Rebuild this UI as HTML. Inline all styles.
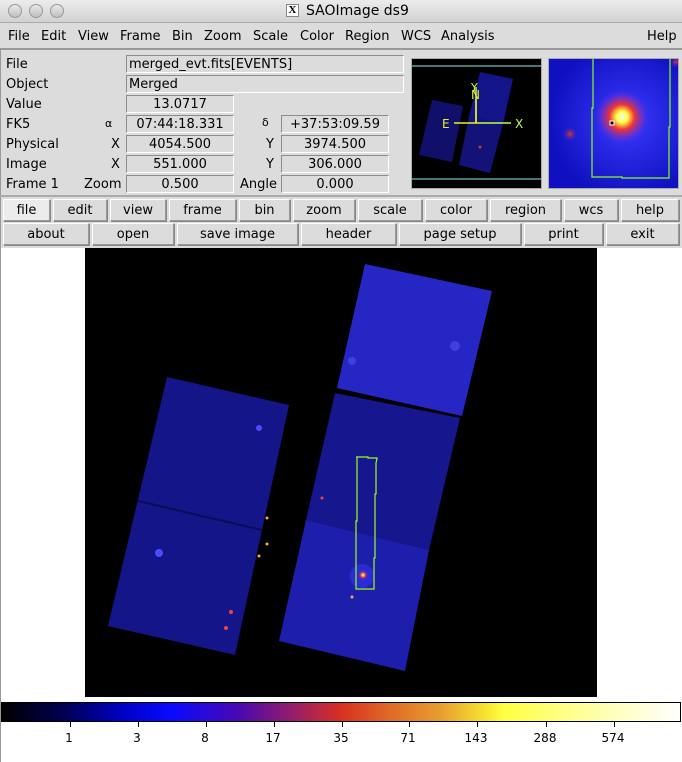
<!DOCTYPE html>
<html><head><meta charset="utf-8"><style>
*{margin:0;padding:0;box-sizing:border-box}
body{width:682px;height:762px;background:#fff;font-family:"DejaVu Sans","Liberation Sans",sans-serif;font-size:13px;color:#000;position:relative;overflow:hidden}
.a{position:absolute}
.t{position:absolute;white-space:nowrap;line-height:18px}
.p .t{margin-top:2px}
.box{position:absolute;background:#dcdcdc;border:1px solid #fff;border-top-color:#8c8c8c;border-left-color:#8c8c8c;height:18px;line-height:17px;text-align:center;white-space:nowrap}
.btn{position:absolute;background:#dcdcdc;border:1px solid #999;border-top-color:#fff;border-left-color:#fff;height:22px;line-height:21px;text-align:center;box-shadow:1px 1px 0 #888}
.tk{position:absolute;top:722px;width:1px;height:5px;background:#000}
.lb{position:absolute;top:729px;width:40px;margin-left:-20px;text-align:center;font-size:12px;line-height:18px}
</style></head><body>
<div class="a" style="left:0;top:0;width:682px;height:23px;background:linear-gradient(#ececec,#d2d2d2);border-bottom:1px solid #aaa"></div>
<div class="a" style="left:8px;top:4px;width:14px;height:14px;border-radius:50%;background:linear-gradient(#e8e8e8,#c0c0c0);border:1px solid #999"></div>
<div class="a" style="left:29px;top:4px;width:14px;height:14px;border-radius:50%;background:linear-gradient(#e8e8e8,#c0c0c0);border:1px solid #999"></div>
<div class="a" style="left:50px;top:4px;width:14px;height:14px;border-radius:50%;background:linear-gradient(#e8e8e8,#c0c0c0);border:1px solid #999"></div>
<div class="a" style="left:286px;top:4px;width:13px;height:13px;border:1px solid #888;background:#fff;font:bold 11px 'Liberation Serif',serif;line-height:11px;text-align:center">X</div>
<div class="t" style="left:306px;top:2px;font-size:14px">SAOImage ds9</div>
<div class="a" style="left:0;top:23px;width:682px;height:27px;background:#dcdcdc;border-bottom:2px solid #999"></div>
<div class="p">
<div class="t" style="top:26px;left:8px">File</div><div class="t" style="top:26px;left:41px">Edit</div><div class="t" style="top:26px;left:78px">View</div><div class="t" style="top:26px;left:120px">Frame</div><div class="t" style="top:26px;left:172px">Bin</div><div class="t" style="top:26px;left:204px">Zoom</div><div class="t" style="top:26px;left:253px">Scale</div><div class="t" style="top:26px;left:300px">Color</div><div class="t" style="top:26px;left:345px">Region</div><div class="t" style="top:26px;left:401px">WCS</div><div class="t" style="top:26px;left:441px">Analysis</div><div class="t" style="top:26px;left:647px">Help</div>
</div>
<div class="a" style="left:0;top:50px;width:682px;height:198px;background:#dcdcdc;border-left:1px solid #999"></div>
<div class="a" style="left:0;top:195px;width:682px;height:2px;background:#aaa"></div>
<div class="p">
<div class="t" style="left:6px;top:54px">File</div>
<div class="t" style="left:6px;top:74px">Object</div>
<div class="t" style="left:6px;top:94px">Value</div>
<div class="t" style="left:6px;top:114px">FK5</div>
<div class="t" style="left:6px;top:134px">Physical</div>
<div class="t" style="left:6px;top:154px">Image</div>
<div class="t" style="left:6px;top:174px">Frame 1</div>
<div class="t" style="left:105px;top:113px;font-size:11px">α</div>
<div class="t" style="left:111px;top:134px">X</div><div class="t" style="left:111px;top:154px">X</div><div class="t" style="left:84px;top:174px">Zoom</div>
<div class="t" style="left:262px;top:112px;font-size:11px">δ</div>
<div class="t" style="left:266px;top:134px">Y</div><div class="t" style="left:266px;top:154px">Y</div><div class="t" style="left:240px;top:174px">Angle</div>
</div>
<div class="box" style="left:126px;top:55px;width:278px;text-align:left;padding-left:2px">merged_evt.fits[EVENTS]</div>
<div class="box" style="left:126px;top:75px;width:278px;text-align:left;padding-left:2px">Merged</div>
<div class="box" style="left:126px;top:95px;width:108px">13.0717</div>
<div class="box" style="left:126px;top:115px;width:108px">07:44:18.331</div>
<div class="box" style="left:126px;top:135px;width:108px">4054.500</div>
<div class="box" style="left:126px;top:155px;width:108px">551.000</div>
<div class="box" style="left:126px;top:175px;width:108px">0.500</div>
<div class="box" style="left:281px;top:115px;width:108px">+37:53:09.59</div>
<div class="box" style="left:281px;top:135px;width:108px">3974.500</div>
<div class="box" style="left:281px;top:155px;width:108px">306.000</div>
<div class="box" style="left:281px;top:175px;width:108px">0.000</div>
<div class="a" style="left:411px;top:58px;width:131px;height:131px;background:#000;border:1px solid #aaa;overflow:hidden">
<svg width="131" height="131">
<line x1="0" y1="7" x2="131" y2="7" stroke="#8ee" /><line x1="0" y1="120" x2="131" y2="120" stroke="#8ee"/>
<polygon points="20,41 51,47 40,103 7,96" fill="#10106a"/>
<polygon points="68,13 101,20 91,65 57,57" fill="#14148a"/>
<polygon points="57,57 91,65 78,114 47,106" fill="#121278"/>
<line x1="65" y1="64" x2="99" y2="64" stroke="#bf4" stroke-width="1.5"/><line x1="64" y1="64" x2="64" y2="28" stroke="#bf4" stroke-width="1.5"/>
<line x1="42" y1="64" x2="65" y2="64" stroke="#ee2" stroke-width="1.5"/><line x1="64" y1="64" x2="64" y2="40" stroke="#ee2" stroke-width="1.5"/>
<text x="103" y="69" fill="#bf4" font-size="12" font-family="DejaVu Sans">X</text>
<text x="59" y="32" fill="#bf4" font-size="11" font-family="DejaVu Sans">Y</text>
<text x="59" y="40" fill="#ee2" font-size="12" font-family="DejaVu Sans">N</text>
<text x="30" y="69" fill="#ee2" font-size="12" font-family="DejaVu Sans">E</text>
<circle cx="68" cy="88" r="1.5" fill="#d33"/>
</svg></div>
<div class="a" style="left:548px;top:58px;width:131px;height:131px;background:#000;border:1px solid #aaa;overflow:hidden">
<svg width="131" height="131"><defs>
<radialGradient id="g" cx="0.6" cy="0.47" r="0.6"><stop offset="0" stop-color="#3a3aff"/><stop offset="1" stop-color="#1010c0"/></radialGradient>
<radialGradient id="s"><stop offset="0" stop-color="#fff"/><stop offset=".2" stop-color="#ff4"/><stop offset=".45" stop-color="#e33"/><stop offset=".75" stop-color="#8030c0" stop-opacity=".6"/><stop offset="1" stop-color="#3030ff" stop-opacity="0"/></radialGradient>
<radialGradient id="r"><stop offset="0" stop-color="#d33"/><stop offset="1" stop-color="#22d" stop-opacity="0"/></radialGradient></defs>
<rect width="131" height="131" fill="url(#g)"/>
<circle cx="73" cy="58" r="28" fill="url(#s)"/>
<circle cx="21" cy="75" r="8" fill="url(#r)"/>
<circle cx="127" cy="3" r="6" fill="url(#r)"/>
<polyline points="44,0 44,49 43,49 43,118 73,118 73,119 120,119 120,68 121,68 121,0" fill="none" stroke="#8f2" stroke-width="1.2"/>
<rect x="61" y="62" width="4" height="4" fill="#000" stroke="#fff"/>
</svg></div>
<div class="btn" style="left:3px;top:199px;width:47px;background:#ececec">file</div>
<div class="btn" style="left:53px;top:199px;width:54px">edit</div>
<div class="btn" style="left:110px;top:199px;width:56px">view</div>
<div class="btn" style="left:169px;top:199px;width:67px">frame</div>
<div class="btn" style="left:239px;top:199px;width:51px">bin</div>
<div class="btn" style="left:293px;top:199px;width:62px">zoom</div>
<div class="btn" style="left:358px;top:199px;width:64px">scale</div>
<div class="btn" style="left:425px;top:199px;width:62px">color</div>
<div class="btn" style="left:490px;top:199px;width:71px">region</div>
<div class="btn" style="left:564px;top:199px;width:54px">wcs</div>
<div class="btn" style="left:621px;top:199px;width:58px">help</div>
<div class="btn" style="left:3px;top:223px;width:86px">about</div>
<div class="btn" style="left:92px;top:223px;width:82px">open</div>
<div class="btn" style="left:177px;top:223px;width:121px">save image</div>
<div class="btn" style="left:301px;top:223px;width:95px">header</div>
<div class="btn" style="left:399px;top:223px;width:122px">page setup</div>
<div class="btn" style="left:524px;top:223px;width:79px">print</div>
<div class="btn" style="left:606px;top:223px;width:73px">exit</div>
<div class="a" style="left:0;top:248px;width:1px;height:514px;background:#999"></div>
<div class="a" style="left:85px;top:248px;width:512px;height:449px;background:#000;overflow:hidden">
<svg width="512" height="449"><defs>
<radialGradient id="s2"><stop offset="0" stop-color="#fff"/><stop offset=".25" stop-color="#fb3"/><stop offset=".5" stop-color="#d33"/><stop offset="1" stop-color="#33f" stop-opacity="0"/></radialGradient></defs>
<polygon points="82,129 204,157 150,407 23,378" fill="#15158a"/>
<line x1="53" y1="253" x2="177" y2="282" stroke="#0c0c55" stroke-width="2"/>
<polygon points="280,16 407,43 377,168 252,140" fill="#2626c4"/>
<polygon points="250,145 375,170 344,302 221,272" fill="#16168e"/>
<polygon points="221,272 344,302 320,423 194,393" fill="#1e1eac"/>
<circle cx="277" cy="328" r="12" fill="#2b2bd6"/>
<circle cx="278" cy="327" r="5" fill="url(#s2)"/>
<circle cx="370" cy="98" r="5" fill="#4040e0"/><circle cx="267" cy="113" r="4" fill="#4040e0"/>
<circle cx="74" cy="305" r="4" fill="#4a4aff"/><circle cx="174" cy="180" r="3" fill="#4a4aff"/>
<circle cx="141" cy="380" r="2" fill="#e44"/><circle cx="146" cy="364" r="2" fill="#e44"/>
<circle cx="182" cy="270" r="1.5" fill="#fa3"/><circle cx="174" cy="308" r="1.5" fill="#fa3"/><circle cx="182" cy="296" r="1.5" fill="#fa3"/><circle cx="267" cy="349" r="1.5" fill="#fa3"/><circle cx="237" cy="250" r="1.5" fill="#e44"/>
<polyline points="271,209 283,209 283,210 292,210 292,211 291,215 291,246 290,246 290,310 289,310 289,341 271,341 271,273 272,273 272,209" fill="none" stroke="#9f2" stroke-width="1.2"/>
</svg></div>
<div class="a" style="left:1px;top:702px;width:680px;height:20px;border:1px solid #000;background:linear-gradient(90deg,#000 0%,#000050 9%,#0000c8 18%,#0a0aff 25%,#4a08b0 35%,#a02060 44%,#d83020 50%,#e06828 57%,#e8a030 65%,#f8e030 71%,#ffff40 74%,#ffff90 84%,#fff 100%)"></div>
<div class="tk" style="left:70px"></div><div class="tk" style="left:138px"></div><div class="tk" style="left:206px"></div><div class="tk" style="left:274px"></div><div class="tk" style="left:342px"></div><div class="tk" style="left:409px"></div><div class="tk" style="left:477px"></div><div class="tk" style="left:546px"></div><div class="tk" style="left:614px"></div>
<div class="lb" style="left:69px">1</div>
<div class="lb" style="left:137px">3</div>
<div class="lb" style="left:205px">8</div>
<div class="lb" style="left:273px">17</div>
<div class="lb" style="left:341px">35</div>
<div class="lb" style="left:408px">71</div>
<div class="lb" style="left:476px">143</div>
<div class="lb" style="left:545px">288</div>
<div class="lb" style="left:613px">574</div>
</body></html>
